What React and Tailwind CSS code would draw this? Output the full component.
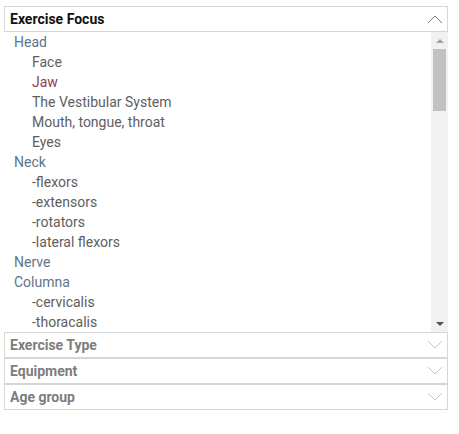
import React from "react";

const items = [
  { label: "Head", level: 0 },
  { label: "Face", level: 1 },
  { label: "Jaw", level: 1, active: true },
  { label: "The Vestibular System", level: 1 },
  { label: "Mouth, tongue, throat", level: 1 },
  { label: "Eyes", level: 1 },
  { label: "Neck", level: 0 },
  { label: "-flexors", level: 1 },
  { label: "-extensors", level: 1 },
  { label: "-rotators", level: 1 },
  { label: "-lateral flexors", level: 1 },
  { label: "Nerve", level: 0 },
  { label: "Columna", level: 0 },
  { label: "-cervicalis", level: 1 },
  { label: "-thoracalis", level: 1 },
];

const Chevron = ({ up, className }) => (
  <svg width="16" height="10" viewBox="0 0 16 10" className={className}>
    <polyline
      points={up ? "1,9 8,2 15,9" : "1,1 8,8 15,1"}
      fill="none"
      stroke="currentColor"
      strokeWidth="1"
    />
  </svg>
);

const ClosedRow = ({ title }) => (
  <div className="flex items-center justify-between h-[26px] border border-[#d6d6d6] pl-[5px] pr-[4px]">
    <span className="font-bold text-[14px] text-[#7d7d7d]">{title}</span>
    <Chevron className="text-[#c4c4c4]" />
  </div>
);

const App = () => {
  return (
    <div
      className="w-[459px] h-[434px] bg-white pt-[6px] pl-[4px]"
      style={{ fontFamily: "Roboto, 'Liberation Sans', sans-serif" }}
    >
      <div className="w-[444px]">
        <div className="flex items-center justify-between h-[26px] border border-[#d6d6d6] pl-[5px] pr-[4px]">
          <span className="font-bold text-[14px] text-[#111]">Exercise Focus</span>
          <Chevron up className="text-[#7a7a7a]" />
        </div>
        <div className="flex h-[300px]">
          <div className="flex-1 overflow-hidden">
            {items.map((it) => (
              <div
                key={it.label}
                className={`h-[20px] leading-[20px] text-[14px] ${
                  it.level === 0 ? "pl-[10px]" : "pl-[28px]"
                } ${
                  it.active
                    ? "text-[#8b4050]"
                    : it.level === 0
                    ? "text-[#607487]"
                    : "text-[#5e5e5e]"
                }`}
              >
                {it.label}
              </div>
            ))}
          </div>
          <div className="w-[17px] bg-[#f1f1f1] flex flex-col items-center">
            <div className="h-[17px] flex items-center justify-center">
              <div className="w-0 h-0 border-l-[4px] border-r-[4px] border-b-[4px] border-l-transparent border-r-transparent border-b-[#a3a3a3]" />
            </div>
            <div className="w-[13px] h-[62px] bg-[#c1c1c1]" />
            <div className="flex-1" />
            <div className="h-[17px] flex items-center justify-center">
              <div className="w-0 h-0 border-l-[4px] border-r-[4px] border-t-[4px] border-l-transparent border-r-transparent border-t-[#505050]" />
            </div>
          </div>
        </div>
        <ClosedRow title="Exercise Type" />
        <ClosedRow title="Equipment" />
        <ClosedRow title="Age group" />
      </div>
    </div>
  );
};

export default App;
